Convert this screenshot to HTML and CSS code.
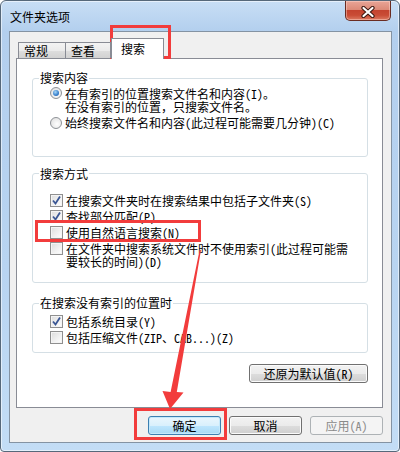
FILE: index.html
```html
<!DOCTYPE html>
<html>
  <head>
    <meta charset="utf-8" />
    <link rel="stylesheet" href="styles.css">
  </head>
  <body>
    <div class="window">
      <div class="titlebar">
        <span class="title">文件夹选项</span>
        <div class="close-btn">
          <svg width="14" height="12" viewBox="0 0 14 12">
            <path d="M2.5,2 L11.5,10 M11.5,2 L2.5,10" stroke="#3b1710" stroke-width="4.2" stroke-linecap="round" />
            <path d="M2.5,2 L11.5,10 M11.5,2 L2.5,10" stroke="#ffffff" stroke-width="2.2" stroke-linecap="round" />
          </svg>
        </div>
      </div>

      <div class="client">
        <div class="tabs">
          <div class="tab tab-general">常规</div>
          <div class="tab tab-view">查看</div>
          <div class="tab active">搜索</div>
        </div>

        <div class="tab-page">
          <fieldset class="group group-content">
            <legend>搜索内容</legend>
            <div class="options">
              <div class="option">
                <span class="radio checked"></span>
                <span class="label two-line">在有索引的位置搜索文件名和内容(I)。<br>在没有索引的位置，只搜索文件名。</span>
              </div>
              <div class="option">
                <span class="radio"></span>
                <span class="label">始终搜索文件名和内容(此过程可能需要几分钟)(C)</span>
              </div>
            </div>
          </fieldset>

          <fieldset class="group group-method">
            <legend>搜索方式</legend>
            <div class="options">
              <div class="option">
                <span class="checkbox checked">
                  <svg width="11" height="11" viewBox="0 0 11 11"><path d="M2,5.5 L4.5,8.5 L9,1.5" fill="none" stroke="#3a5694" stroke-width="1.8" /></svg>
                </span>
                <span class="label">在搜索文件夹时在搜索结果中包括子文件夹(S)</span>
              </div>
              <div class="option">
                <span class="checkbox checked">
                  <svg width="11" height="11" viewBox="0 0 11 11"><path d="M2,5.5 L4.5,8.5 L9,1.5" fill="none" stroke="#3a5694" stroke-width="1.8" /></svg>
                </span>
                <span class="label">查找部分匹配(P)</span>
              </div>
              <div class="option">
                <span class="checkbox"></span>
                <span class="label">使用自然语言搜索(N)</span>
              </div>
              <div class="option">
                <span class="checkbox"></span>
                <span class="label two-line">在文件夹中搜索系统文件时不使用索引(此过程可能需<br>要较长的时间)(D)</span>
              </div>
            </div>
          </fieldset>

          <fieldset class="group group-unindexed">
            <legend>在搜索没有索引的位置时</legend>
            <div class="options">
              <div class="option">
                <span class="checkbox checked">
                  <svg width="11" height="11" viewBox="0 0 11 11"><path d="M2,5.5 L4.5,8.5 L9,1.5" fill="none" stroke="#3a5694" stroke-width="1.8" /></svg>
                </span>
                <span class="label">包括系统目录(Y)</span>
              </div>
              <div class="option">
                <span class="checkbox"></span>
                <span class="label">包括压缩文件(ZIP、CAB...)(Z)</span>
              </div>
            </div>
          </fieldset>

          <div class="restore-row">
            <button class="button button-restore">还原为默认值(R)</button>
          </div>
        </div>

        <div class="dialog-buttons">
          <button class="button button-default">确定</button>
          <button class="button">取消</button>
          <button class="button" disabled>应用(A)</button>
        </div>
      </div>
    </div>

    <!-- red annotations drawn over the dialog -->
    <div class="mark mark-tab"></div>
    <div class="mark mark-option"></div>
    <div class="mark mark-ok"></div>
    <svg class="arrow" width="400" height="452" viewBox="0 0 400 452">
      <polygon points="199.6,250 201,250 176.8,392 183.5,392.5 170,409 162.5,391 170.6,392" fill="#f23c3c" />
    </svg>
  </body>
</html>
```

FILE: styles.css
```css
body {
  position: relative;
  width: 400px;
  height: 452px;
  margin: 0;
  overflow: hidden;
  background: #ffffff;
  font-family: "Noto Sans Mono CJK SC", "Noto Sans CJK SC", sans-serif;
  font-size: 12px;
  line-height: 12px;
  color: #000000;
}

.window {
  box-sizing: border-box;
  height: 452px;
  display: flex;
  flex-direction: column;
  padding: 0 7px 8px 8px;
  border: 1px solid #56687a;
  border-radius: 6px 6px 4px 4px;
  background: linear-gradient(180deg, #c8def5 0%, #b3cfee 30px, #b8d4f1 60%, #c3ddf6 100%);
  box-shadow: inset 0 0 0 1px rgba(255, 255, 255, 0.55);
}

.titlebar {
  height: 30px;
  display: flex;
  justify-content: space-between;
  align-items: flex-start;
}

.title {
  margin: 9px 0 0 1px;
  line-height: 14px;
}

.close-btn {
  width: 46px;
  height: 20px;
  margin-right: 1px;
  display: flex;
  align-items: center;
  justify-content: center;
  box-sizing: border-box;
  padding-top: 2px;
  border: 1px solid #6a2c22;
  border-top: none;
  border-radius: 0 0 5px 5px;
  background: linear-gradient(180deg, #e8a597 0%, #dc8a78 45%, #c4432f 50%, #c94c36 75%, #dc7a62 100%);
  box-shadow: inset 0 0 0 1px rgba(255, 220, 210, 0.45);
}

.client {
  flex: 1;
  display: flex;
  flex-direction: column;
  padding: 6px 8px 0 6px;
  border: 1px solid #8493a3;
  background: #f0f0f0;
}

.tabs {
  position: relative;
  z-index: 1;
  height: 21px;
  margin-bottom: -1px;
  padding-left: 2px;
  display: flex;
  align-items: flex-end;
}

.tab {
  box-sizing: border-box;
  height: 16px;
  margin-bottom: 1px;
  padding-left: 5px;
  line-height: 15px;
  border: 1px solid #898c95;
  border-bottom: none;
  background: linear-gradient(180deg, #f3f3f3 0%, #ebebeb 50%, #dedede 51%, #d2d2d2 100%);
}

.tab-general {
  width: 48px;
}

.tab-view {
  width: 45px;
  border-left: none;
}

.tab.active {
  width: 53px;
  height: 21px;
  margin-bottom: 0;
  padding: 3px 0 0 9px;
  line-height: 14px;
  background: #ffffff;
}

.tab-page {
  box-sizing: border-box;
  height: 350px;
  display: flex;
  flex-direction: column;
  padding: 0 14px 0 15px;
  border: 1px solid #898c95;
  background: #ffffff;
}

.group {
  margin: 0;
  padding: 0 0 0 6px;
  min-width: 0;
  border: 1px solid #d5dfe5;
  border-radius: 3px;
}

.group legend {
  padding: 0 1px;
  line-height: 14px;
}

.options {
  display: flex;
  flex-direction: column;
  gap: 4px;
  margin-left: 11px;
}

.group-content {
  margin-top: 12px;
  padding-bottom: 27px;
}

.group-content .options {
  padding-top: 2px;
}

.group-method {
  margin-top: 10px;
  padding-bottom: 14px;
}

.group-method .options {
  padding-top: 14px;
}

.group-unindexed {
  margin-top: 13px;
  padding-bottom: 8px;
}

.group-unindexed .options {
  padding-top: 6px;
}

.option {
  display: flex;
  align-items: flex-start;
}

.label {
  white-space: nowrap;
}

.label.two-line {
  line-height: 13px;
  margin-top: -0.5px;
}

.radio {
  position: relative;
  flex: none;
  box-sizing: border-box;
  width: 12px;
  height: 12px;
  margin-right: 3px;
  border: 1px solid #8e9297;
  border-radius: 50%;
  background: radial-gradient(circle at 60% 60%, #ffffff 0%, #e6e6e6 70%, #d3d3d3 100%);
}

.radio.checked::after {
  content: "";
  position: absolute;
  top: 2px;
  left: 2px;
  width: 6px;
  height: 6px;
  border-radius: 50%;
  background: radial-gradient(circle at 40% 35%, #a8d8f8 0%, #3d85cf 55%, #1a4f9a 100%);
}

.checkbox {
  flex: none;
  box-sizing: border-box;
  width: 13px;
  height: 13px;
  margin: -1px 3px 0 0;
  display: flex;
  align-items: center;
  justify-content: center;
  border: 1px solid #8f8f8f;
  background: linear-gradient(135deg, #dcdcdc 0%, #f2f2f2 60%, #ffffff 100%);
  box-shadow: inset 0 0 0 1px #f4f4f4;
}

.restore-row {
  display: flex;
  justify-content: flex-end;
  margin-top: 11px;
}

.button {
  box-sizing: border-box;
  height: 19px;
  padding: 0;
  font-family: inherit;
  font-size: 12px;
  line-height: 17px;
  color: #000000;
  border: 1px solid #707070;
  border-radius: 3px;
  background: linear-gradient(180deg, #f2f2f2 0%, #ebebeb 50%, #dddddd 51%, #cfcfcf 100%);
  box-shadow: inset 0 0 0 1px #fbfbfb;
}

.button-restore {
  width: 119px;
}

.dialog-buttons {
  display: flex;
  justify-content: flex-end;
  gap: 8px;
  margin-top: 8px;
}

.dialog-buttons .button {
  width: 73px;
}

.button-default {
  border-color: #3c7fb1;
  background: linear-gradient(180deg, #eaf6fd 0%, #d9f0fc 50%, #bee6fd 51%, #a7d9f5 100%);
  box-shadow: inset 0 0 0 1px #c4e8fb;
}

.button:disabled {
  color: #8a8a8a;
  border-color: #adb2b5;
  background: #f4f4f4;
  box-shadow: none;
}

.mark {
  position: absolute;
  box-sizing: border-box;
  border: 3px solid #f23c3c;
}

.mark-tab {
  left: 110px;
  top: 25px;
  width: 61px;
  height: 34px;
}

.mark-option {
  left: 35px;
  top: 220px;
  width: 166px;
  height: 22px;
}

.mark-ok {
  left: 134px;
  top: 408px;
  width: 93px;
  height: 32px;
}

.arrow {
  position: absolute;
  top: 0;
  left: 0;
  pointer-events: none;
}
```
